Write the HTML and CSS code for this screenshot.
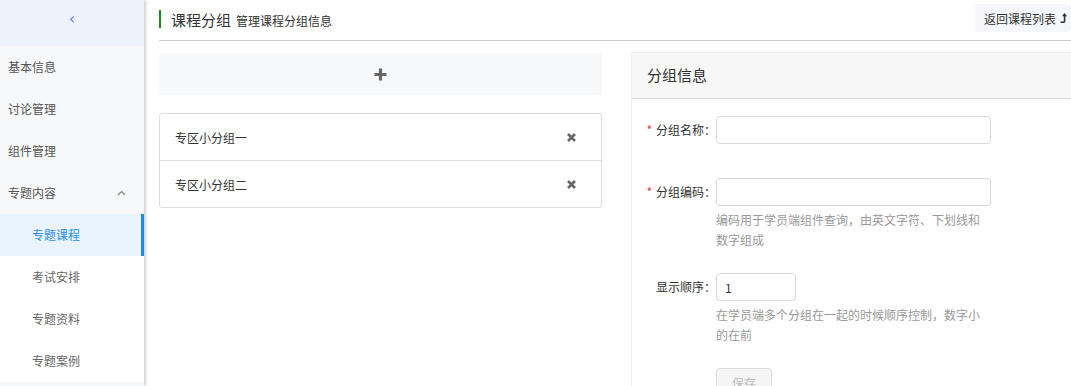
FILE: index.html
```html
<!DOCTYPE html>
<html lang="zh-CN">
<head>
    <meta charset="utf-8">
    <title>课程分组</title>
    <link rel="stylesheet" href="styles.css">
</head>
<body>

<div id="layout">
    <!-- Sidebar -->
    <div id="sidebar">
        <div class="collapse-bar">&lsaquo;</div>
        <ul class="menu">
            <li class="menu-item">基本信息</li>
            <li class="menu-item">讨论管理</li>
            <li class="menu-item">组件管理</li>
            <li class="menu-item open">专题内容
                <svg class="caret" width="9" height="6" viewBox="0 0 9 6"><path d="M1 5 L4.5 1.5 L8 5" fill="none" stroke="#888" stroke-width="1.2"/></svg>
            </li>
            <li class="sub-item active">专题课程</li>
            <li class="sub-item">考试安排</li>
            <li class="sub-item">专题资料</li>
            <li class="sub-item">专题案例</li>
        </ul>
    </div>

    <!-- Main -->
    <div id="main">
        <div class="page-header">
            <div class="page-title">
                <span class="title">课程分组</span>
                <span class="subtitle">管理课程分组信息</span>
            </div>
            <button class="back-btn">返回课程列表
                <svg width="7" height="10" viewBox="0 0 7 10"><path d="M4.5 0 L7 3.2 L5.4 3.2 L5.4 8.2 Q5.4 10 3.6 10 L0.5 10 L0.5 8.6 L3.3 8.6 Q3.8 8.6 3.8 8.1 L3.8 3.2 L2 3.2 Z" fill="#333"/></svg>
            </button>
        </div>

        <div class="content">
            <div class="left-col">
                <div class="add-box">
                    <svg width="13" height="13" viewBox="0 0 13 13"><path d="M6.5 0.5 V12.5 M0.5 6.5 H12.5" stroke="#666" stroke-width="3.2"/></svg>
                </div>
                <ul class="group-list">
                    <li class="group-item">
                        <span>专区小分组一</span>
                        <svg class="del" width="9" height="9" viewBox="0 0 9 9"><path d="M1 1 L8 8 M8 1 L1 8" stroke="#666" stroke-width="2.6"/></svg>
                    </li>
                    <li class="group-item">
                        <span>专区小分组二</span>
                        <svg class="del" width="9" height="9" viewBox="0 0 9 9"><path d="M1 1 L8 8 M8 1 L1 8" stroke="#666" stroke-width="2.6"/></svg>
                    </li>
                </ul>
            </div>

            <div class="panel">
                <div class="panel-head">分组信息</div>
                <form class="panel-body">
                    <div class="form-row first">
                        <label><i>*</i>分组名称：</label>
                        <div class="field">
                            <input type="text" class="input-long">
                        </div>
                    </div>
                    <div class="form-row">
                        <label><i>*</i>分组编码：</label>
                        <div class="field">
                            <input type="text" class="input-long">
                            <p class="help">编码用于学员端组件查询，由英文字符、下划线和数字组成</p>
                        </div>
                    </div>
                    <div class="form-row">
                        <label>显示顺序：</label>
                        <div class="field">
                            <input type="text" class="input-short" value="1">
                            <p class="help">在学员端多个分组在一起的时候顺序控制，数字小的在前</p>
                        </div>
                    </div>
                    <div class="form-row">
                        <label></label>
                        <div class="field">
                            <button type="button" class="save-btn" disabled>保存</button>
                        </div>
                    </div>
                </form>
            </div>
        </div>
    </div>
</div>

</body>
</html>
```

FILE: styles.css
```css
body {
    margin: 0;
    padding: 0;
    font-family: "Noto Sans CJK SC", "Liberation Sans", sans-serif;
    font-size: 12px;
    color: #333;
    overflow: hidden;
}

#layout {
    display: flex;
    height: 386px;
}

/* sidebar */
#sidebar {
    width: 144px;
    flex-shrink: 0;
    background-color: #f7f8fa;
    box-shadow: 2px 0 3px rgba(0, 0, 0, 0.18);
    position: relative;
    z-index: 1;
}

.collapse-bar {
    height: 46px;
    background-color: #eef2fa;
    color: #5b8def;
    text-align: center;
    font-size: 16px;
    line-height: 38px;
    font-family: "DejaVu Sans", sans-serif;
}

.menu {
    list-style: none;
    margin: 0;
    padding: 0;
}

.menu-item {
    height: 42px;
    line-height: 42px;
    padding-left: 8px;
    color: #555;
    position: relative;
}

.caret {
    position: absolute;
    right: 18px;
    top: 18px;
}

.sub-item {
    height: 42px;
    line-height: 42px;
    padding-left: 32px;
    color: #666;
    background-color: #fff;
}

.sub-item.active {
    background-color: #e9f4fd;
    color: #2b8ef0;
    border-right: 3px solid #1a8cf0;
}

/* main */
#main {
    flex: 1;
    padding-left: 15px;
}

.page-header {
    height: 40px;
    border-bottom: 1px solid #ccc;
    display: flex;
    justify-content: space-between;
    align-items: flex-start;
}

.page-title {
    margin-top: 10px;
    height: 18px;
    border-left: 2px solid #1e8c1e;
    padding-left: 10px;
    display: flex;
    align-items: center;
    gap: 5px;
}

.title {
    font-size: 15px;
    color: #333;
}

.subtitle {
    font-size: 12px;
    color: #333;
    padding-top: 2px;
}

.back-btn {
    margin-top: 4px;
    height: 28px;
    border: none;
    border-radius: 3px;
    background-color: #f5f7fa;
    font-family: inherit;
    font-size: 12px;
    color: #333;
    padding: 0 4px 0 9px;
    display: flex;
    align-items: center;
    gap: 4px;
}

.content {
    display: flex;
    gap: 29px;
    padding-top: 11px;
}

.left-col {
    width: 443px;
    flex-shrink: 0;
    padding-top: 1px;
}

.add-box {
    height: 42px;
    background-color: #f7f8fa;
    display: flex;
    align-items: center;
    justify-content: center;
}

.group-list {
    list-style: none;
    margin: 18px 0 0 0;
    padding: 0;
    border: 1px solid #ddd;
    border-radius: 3px;
}

.group-item {
    height: 46px;
    display: flex;
    align-items: center;
    justify-content: space-between;
    padding: 0 25px 0 15px;
}

.group-item + .group-item {
    border-top: 1px solid #ddd;
}

/* panel */
.panel {
    flex: 1;
    border-left: 1px solid #eee;
    border-top: 1px solid #eee;
}

.panel-head {
    height: 45px;
    line-height: 43px;
    background-color: #f7f7f7;
    border-bottom: 1px solid #ddd;
    padding-left: 15px;
    font-size: 15px;
}

.panel-body {
    padding-top: 17px;
}

.form-row {
    display: flex;
    margin-bottom: 23px;
}

.form-row.first {
    margin-bottom: 34px;
}

.form-row label {
    width: 84px;
    text-align: right;
    line-height: 28px;
    color: #333;
}

.form-row label i {
    font-style: normal;
    color: #e4393c;
    margin-right: 4px;
}

.field input {
    display: block;
    box-sizing: border-box;
    height: 28px;
    border: 1px solid #d9d9d9;
    border-radius: 4px;
    padding: 0 8px;
    font-family: inherit;
    font-size: 12px;
    color: #333;
}

.input-long {
    width: 275px;
}

.input-short {
    width: 80px;
}

.help {
    margin: 4px 0 0 0;
    width: 275px;
    line-height: 20px;
    color: #999;
}

.save-btn {
    width: 56px;
    height: 28px;
    border: 1px solid #ddd;
    border-radius: 4px;
    background-color: #f5f5f5;
    color: #bbb;
    font-family: inherit;
    font-size: 12px;
}
```
